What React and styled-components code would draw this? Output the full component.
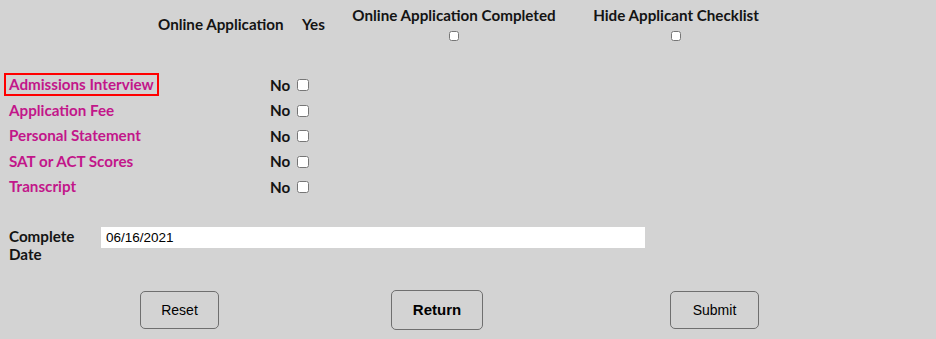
import React from "react";
import styled, { createGlobalStyle } from "styled-components";

const Global = createGlobalStyle`
  html, body { margin: 0; padding: 0; background: #d3d3d3; }
  body { font-family: "Lato", "Noto Sans", sans-serif; }
`;

const Page = styled.div`
  width: 936px;
  height: 339px;
  background: #d3d3d3;
  color: #141414;
  font-family: "Lato", "Noto Sans", sans-serif;
  font-weight: 700;
  font-size: 15.2px;
  overflow: hidden;
`;

const Header = styled.div`
  display: flex;
  align-items: flex-start;
  padding: 6px 0 0 158px;
  height: 34px;
`;

const HeaderText = styled.span`
  width: ${(p) => p.$w}px;
  line-height: 18px;
  margin-top: 9px;
  white-space: nowrap;
`;

const HeaderCol = styled.div`
  display: flex;
  flex-direction: column;
  align-items: center;
  width: ${(p) => p.$w}px;
  line-height: 18px;
  white-space: nowrap;
`;

const SmallCheck = styled.input.attrs({ type: "checkbox" })`
  width: 10px;
  height: 10px;
  margin: 7px 0 0;
`;

const Rows = styled.div`
  margin-top: 32px;
  padding-left: 4px;
`;

const Row = styled.div`
  display: flex;
  align-items: center;
  height: 25.5px;
`;

const Item = styled.span`
  width: 266px;
  flex: none;
`;

const ItemLabel = styled.span`
  display: inline-block;
  color: #c2168a;
  line-height: 19px;
  padding: 0 3px;
  border: 2px solid ${(p) => (p.$active ? "#ff0000" : "transparent")};
  white-space: nowrap;
`;

const No = styled.span`
  width: 27px;
  flex: none;
`;

const RowCheck = styled.input.attrs({ type: "checkbox" })`
  width: 12px;
  height: 12px;
  margin: 1px 0 0;
`;

const DateRow = styled.div`
  display: flex;
  align-items: flex-start;
  margin-top: 27px;
  padding-left: 9px;
`;

const DateLabel = styled.div`
  width: 92px;
  line-height: 18px;
`;

const DateInput = styled.input`
  width: 544px;
  height: 21px;
  box-sizing: border-box;
  border: none;
  background: #fff;
  padding: 0 5px;
  font-family: "Liberation Sans", Arial, sans-serif;
  font-size: 13.5px;
  color: #000;
  outline: none;
`;

const Buttons = styled.div`
  display: flex;
  align-items: center;
  margin-top: 27px;
  padding-left: 140px;
`;

const Button = styled.button`
  box-sizing: border-box;
  width: ${(p) => p.$w}px;
  height: ${(p) => p.$h}px;
  margin-left: ${(p) => p.$ml || 0}px;
  background: #d3d3d3;
  border: 1px solid #6f6f6f;
  border-radius: 5px;
  font-family: "Liberation Sans", Arial, sans-serif;
  font-size: ${(p) => (p.$bold ? 15 : 14)}px;
  font-weight: ${(p) => (p.$bold ? 700 : 400)};
  color: #000;
  padding: 0;
`;

const items = [
  "Admissions Interview",
  "Application Fee",
  "Personal Statement",
  "SAT or ACT Scores",
  "Transcript",
];

export default function App() {
  return (
    <Page>
      <Global />
      <Header>
        <HeaderText $w={144}>Online Application</HeaderText>
        <HeaderText $w={40}>Yes</HeaderText>
        <HeaderCol $w={224}>
          Online Application Completed
          <SmallCheck />
        </HeaderCol>
        <HeaderCol $w={220}>
          Hide Applicant Checklist
          <SmallCheck />
        </HeaderCol>
      </Header>
      <Rows>
        {items.map((t, i) => (
          <Row key={t}>
            <Item>
              <ItemLabel $active={i === 0}>{t}</ItemLabel>
            </Item>
            <No>No</No>
            <RowCheck />
          </Row>
        ))}
      </Rows>
      <DateRow>
        <DateLabel>
          Complete
          <br />
          Date
        </DateLabel>
        <DateInput defaultValue="06/16/2021" />
      </DateRow>
      <Buttons>
        <Button $w={79} $h={38}>Reset</Button>
        <Button $w={92} $h={40} $ml={172} $bold>Return</Button>
        <Button $w={89} $h={38} $ml={187}>Submit</Button>
      </Buttons>
    </Page>
  );
}
